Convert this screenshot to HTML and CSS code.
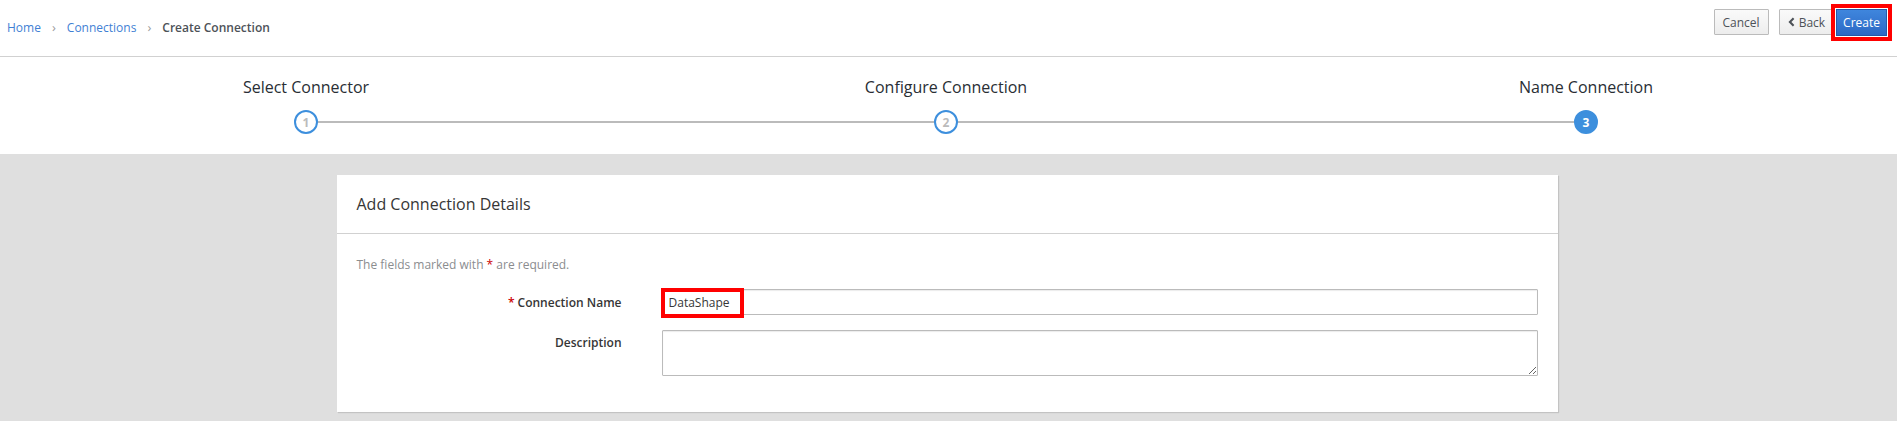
FILE: index.html
```html
<!DOCTYPE html>
<html>
<head>
<meta charset="utf-8">
<link rel="stylesheet" href="styles.css">
</head>
<body>
<header class="topbar">
  <nav class="crumbs">
    <a class="crumb-link" href="#">Home</a>
    <span class="crumb-sep">›</span>
    <a class="crumb-link" href="#">Connections</a>
    <span class="crumb-sep">›</span>
    <span class="crumb-current">Create Connection</span>
  </nav>
  <div class="actions">
    <button class="btn">Cancel</button>
    <button class="btn btn-back"><svg class="chev" viewBox="0 0 8 10" width="7" height="10"><path d="M6.4 0.8 L2.2 5 L6.4 9.2" fill="none" stroke="#4d5258" stroke-width="2.4"/></svg>Back</button>
    <button class="btn btn-primary">Create</button>
  </div>
</header>

<section class="wizard">
  <div class="wizard-line"></div>
  <div class="step">
    <div class="step-title">Select Connector</div>
    <div class="step-circle">1</div>
  </div>
  <div class="step">
    <div class="step-title">Configure Connection</div>
    <div class="step-circle">2</div>
  </div>
  <div class="step">
    <div class="step-title">Name Connection</div>
    <div class="step-circle active">3</div>
  </div>
</section>

<main class="content">
  <div class="card">
    <div class="card-head">Add Connection Details</div>
    <div class="card-body">
      <p class="req-note">The fields marked with <span class="star">*</span> are required.</p>
      <div class="form">
        <label class="label"><span class="star">*</span> Connection Name</label>
        <div class="field">
          <input class="input" type="text" value="DataShape">
          <span class="highlight"></span>
        </div>
        <label class="label label-top">Description</label>
        <div class="field">
          <textarea class="textarea"></textarea>
        </div>
      </div>
    </div>
  </div>
</main>
</body>
</html>
```

FILE: styles.css
```css
* { box-sizing: border-box; }
html, body { margin: 0; padding: 0; }
body {
  font-family: "Open Sans", "Noto Sans", sans-serif;
  font-size: 12px;
  color: #363636;
  background: #dfdfdf;
  height: 421px;
  overflow: hidden;
}

.topbar {
  height: 57px;
  background: #fff;
  border-bottom: 1px solid #d1d1d1;
  display: flex;
  align-items: center;
  justify-content: space-between;
  padding: 0 10px 1px 7px;
}
.crumbs { display: flex; align-items: center; margin-top: -1px; }
.crumb-link { color: #3f7fd4; text-decoration: none; }
.crumb-sep { color: #9c9c9c; margin: 0 11px; font-size: 13px; }
.crumb-current { color: #4d5258; font-weight: 600; }

.actions { display: flex; align-items: center; margin-top: -11px; }
.btn {
  font-family: inherit;
  font-size: 12px;
  height: 26px;
  padding: 0 8px;
  border: 1px solid #bbb;
  border-radius: 1px;
  background: linear-gradient(#fafafa, #ededed);
  color: #4d5258;
  margin-left: 10px;
  display: flex;
  align-items: center;
}
.btn-back { padding-left: 8px; padding-right: 8px; }
.chev { margin-right: 4px; }
.btn-primary {
  margin-left: 2px;
  color: #fff;
  background: linear-gradient(#3f86dd, #2c69c5);
  border-color: #2559a8;
  border-radius: 0;
  outline: 4px solid #ff0000;
  outline-offset: 1px;
  padding: 0 6px;
  height: 27px;
}

.wizard {
  position: relative;
  height: 97px;
  background: #fff;
  display: flex;
  justify-content: space-between;
  padding: 0 161px 0 156px;
}
.wizard-line {
  position: absolute;
  left: 306px;
  right: 311px;
  top: 64px;
  height: 2px;
  background: #bbbbbb;
}
.step {
  width: 300px;
  display: flex;
  flex-direction: column;
  align-items: center;
  position: relative;
}
.step-title {
  font-size: 16px;
  color: #292e34;
  margin-top: 19px;
  line-height: 22px;
}
.step-circle {
  margin-top: 12px;
  width: 24px;
  height: 24px;
  border-radius: 50%;
  border: 2px solid #3d8fdd;
  background: #fff;
  color: #bbb;
  font-size: 12px;
  font-weight: 700;
  display: flex;
  align-items: center;
  justify-content: center;
  position: relative;
}
.step-circle.active { background: #3d8fdd; color: #fff; }

.content {
  padding: 21px 0 0 0;
  display: flex;
  justify-content: center;
}
.card {
  width: 1221px;
  margin-left: -3px;
  background: #fff;
  box-shadow: 1px 1px 1px rgba(0,0,0,0.12);
  height: 237px;
}
.card-head {
  height: 59px;
  border-bottom: 1px solid #d1d1d1;
  padding: 0 20px;
  font-size: 16px;
  display: flex;
  align-items: center;
  color: #363636;
}
.card-body { padding: 0 20px; }
.req-note {
  margin: 0;
  padding-top: 22px;
  color: #8b8d8f;
  font-size: 12px;
  line-height: 17px;
}
.star { color: #cc0000; }
.form {
  margin-top: 16px;
  display: grid;
  grid-template-columns: 265px 1fr;
  column-gap: 40px;
  row-gap: 15px;
}
.label {
  text-align: right;
  font-weight: 600;
  color: #363636;
  align-self: center;
}
.label-top { align-self: start; padding-top: 4px; }
.field { position: relative; }
.input, .textarea {
  display: block;
  width: 100%;
  font-family: inherit;
  font-size: 12px;
  color: #363636;
  border: 1px solid #bbb;
  border-radius: 1px;
  box-shadow: inset 0 1px 1px rgba(3,3,3,0.08);
  background: #fff;
  padding: 2px 6px;
}
.input { height: 26px; }
.textarea { height: 46px; resize: vertical; }
.highlight {
  position: absolute;
  left: -1px;
  top: -1px;
  width: 83px;
  height: 30px;
  border: 4px solid #ff0000;
  pointer-events: none;
}
```
